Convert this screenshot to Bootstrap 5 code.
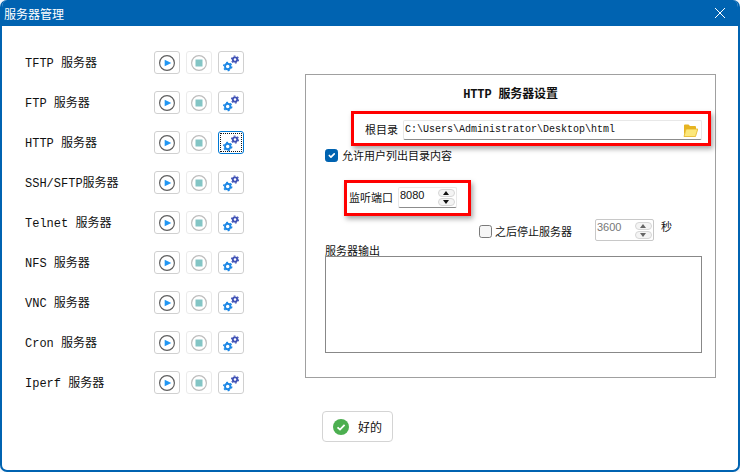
<!DOCTYPE html>
<html lang="zh">
<head>
<meta charset="utf-8">
<title>服务器管理</title>
<link href="https://cdn.jsdelivr.net/npm/bootstrap@5.3.0/dist/css/bootstrap.min.css" rel="stylesheet">
<style>
html,body{height:100%;margin:0;background:#f4f7fb;}
body{font:12px/14px "Liberation Mono","Noto Sans CJK SC",monospace;color:#111;overflow:hidden;}
.win{position:relative;width:740px;height:472px;background:#fff;border:solid #0063b1;border-width:0 2px 2px 2px;border-radius:7px;overflow:hidden;}
.titlebar{height:26px;background:#0063b1;color:#fff;margin:0 -2px;padding:0 14px 0 4px;font:12px "Liberation Sans","Noto Sans CJK SC",sans-serif;}
.main-area{padding:25px 0 0 23px;height:352px;}
.side{width:219px;flex:none;}
.srv-row{height:23px;margin-bottom:17px;}
.srv-name{width:129px;flex:none;padding-top:2px;}
.tools{gap:6px;}
.tool{width:26px;height:23px;padding:0;background:#fff;border:1px solid #d0d0d0;border-radius:3px;line-height:0;flex:none;}
.tool.off{border-color:#ebebeb;}
.tool.focused{border-color:#0078d4;outline:1px dotted #111;outline-offset:-3px;}
.tool svg{display:block;margin:auto;}
.panel-box{width:411px;height:304px;margin:23px 0 0 61px;border:1px solid #a0a0a0;padding:0 13px 0 19px;font:11px/14px "Noto Sans CJK SC","Liberation Sans",sans-serif;}
.panel-head{font:700 12px/14px "Liberation Mono","Noto Sans CJK SC",monospace;text-align:center;margin:13px -13px 18px -19px;height:14px;letter-spacing:-.15px;}
.dir-row{height:20px;margin-left:40px;}
.dir-row label{width:38px;padding-bottom:2px;}
.dir-field{flex:1;height:20px;border:1px solid #e8e8e8;border-bottom-color:#8c8c8c;border-radius:2px;padding:0 3px 0 1px;}
.dir-field span{flex:1;font:10px "Liberation Mono",monospace;padding-bottom:1px;}
.chk{width:13px;height:13px;margin:0;border-radius:3px;flex:none;}
.chk:checked{background-color:#0063b1;border-color:#0063b1;}
.chk.blank{background:#f6f6f6;border-color:#7a7a7a;}
.allow-row{margin-top:9px;height:13px;gap:4px;}
.allow-row span{padding-bottom:1px;}
.port-row{margin:25px 0 0 24px;height:21px;}
.port-row label{width:49px;padding-bottom:2px;}
.spin{height:21px;border:1px solid #e8e8e8;border-bottom-color:#8c8c8c;border-radius:2px;padding:0 1px 0 1px;}
.spin-w{width:59px;flex:none;}
.spin-val{flex:1;font:11px "Liberation Sans",sans-serif;padding-bottom:5px;}
.spin-btns{width:17px;gap:1px;flex:none;}
.spin-btn{height:8px;border:1px solid #d6d6d6;border-radius:4px;background:#f4f4f4;display:block;position:relative;}
.spin-btn::after{content:"";position:absolute;left:4px;border-left:3.5px solid transparent;border-right:3.5px solid transparent;}
.spin-btn.up::after{top:1px;border-bottom:4px solid #111;}
.spin-btn.dn::after{top:1px;border-top:4px solid #111;}
.stop-row{height:22px;margin:11px 0 0 154px;}
.stop-row .lbl{width:103px;padding-left:3px;margin-top:5px;flex:none;}
.stop-row .chk{margin-top:6px;}
.stop-row .spin-val{padding-bottom:6px;}
.spin.dis{height:22px;border:1px solid #c8c8c8;border-radius:2px;color:#777;}
.spin.dis .spin-btn.up::after{border-bottom-color:#666;}
.spin.dis .spin-btn.dn::after{border-top-color:#666;}
.sec{margin:0 0 0 7px;}
.out-lbl{height:13px;margin-top:2px;line-height:15px;}
.out-box{height:97px;border:1px solid #888;}
.footer-area{padding:33px 0 0 320px;}
.ok-btn{width:71px;height:31px;padding:0 0 0 10px;background:#fff;border:1px solid #d4d4d4;border-radius:4px;font:12px "Liberation Mono","Noto Sans CJK SC",monospace;color:#111;gap:9px;}
.mark-box{position:absolute;border:3px solid #f00;box-shadow:2px 3px 5px rgba(0,0,0,.35);pointer-events:none;}
.mark-a{left:349px;top:111px;width:360px;height:35px;}
.mark-b{left:342px;top:180px;width:127px;height:36px;}
</style>
</head>
<body>
<div class="win">
  <div class="titlebar d-flex justify-content-between align-items-center">
    <span>服务器管理</span>
    <svg width="12" height="12" viewBox="0 0 12 12"><path d="M1 1l10 10M11 1L1 11" stroke="#fff" stroke-width="1"/></svg>
  </div>
  <svg width="0" height="0" class="d-block">
    <defs>
      <g id="i-play"><circle cx="10" cy="10" r="7.4" fill="#fff" stroke="#5f5f5f" stroke-width="1.2"/><path d="M7.700 6.700 14.300 10 7.700 13.300z" fill="#2196f3"/></g>
      <g id="i-stop"><circle cx="10" cy="10" r="7.4" fill="#fff" stroke="#bdbdbd" stroke-width="1.2"/><rect x="6.500" y="6.500" width="7" height="7" fill="#83c5c5"/></g>
      <g id="i-gear"><circle cx="6.700" cy="13.500" r="2.700" fill="none" stroke="#1e88e5" stroke-width="1.900"/><circle cx="6.700" cy="13.500" r="4.100" fill="none" stroke="#1e88e5" stroke-width="1.300" stroke-dasharray="2 2.300"/><circle cx="14" cy="6.500" r="2.200" fill="none" stroke="#3f51b5" stroke-width="1.800"/><circle cx="14" cy="6.500" r="3.500" fill="none" stroke="#3f51b5" stroke-width="1.200" stroke-dasharray="1.800 1.870"/></g>
    </defs>
  </svg>
  <div class="main-area d-flex">
    <div class="side">
      <div class="srv-row d-flex align-items-center"><span class="srv-name">TFTP 服务器</span><div class="d-flex tools"><button class="btn tool"><svg width="20" height="20"><use href="#i-play"/></svg></button><button class="btn tool off"><svg width="20" height="20"><use href="#i-stop"/></svg></button><button class="btn tool"><svg width="20" height="20"><use href="#i-gear"/></svg></button></div></div>
      <div class="srv-row d-flex align-items-center"><span class="srv-name">FTP 服务器</span><div class="d-flex tools"><button class="btn tool"><svg width="20" height="20"><use href="#i-play"/></svg></button><button class="btn tool off"><svg width="20" height="20"><use href="#i-stop"/></svg></button><button class="btn tool"><svg width="20" height="20"><use href="#i-gear"/></svg></button></div></div>
      <div class="srv-row d-flex align-items-center"><span class="srv-name">HTTP 服务器</span><div class="d-flex tools"><button class="btn tool"><svg width="20" height="20"><use href="#i-play"/></svg></button><button class="btn tool off"><svg width="20" height="20"><use href="#i-stop"/></svg></button><button class="btn tool focused"><svg width="20" height="20"><use href="#i-gear"/></svg></button></div></div>
      <div class="srv-row d-flex align-items-center"><span class="srv-name">SSH/SFTP服务器</span><div class="d-flex tools"><button class="btn tool"><svg width="20" height="20"><use href="#i-play"/></svg></button><button class="btn tool off"><svg width="20" height="20"><use href="#i-stop"/></svg></button><button class="btn tool"><svg width="20" height="20"><use href="#i-gear"/></svg></button></div></div>
      <div class="srv-row d-flex align-items-center"><span class="srv-name">Telnet 服务器</span><div class="d-flex tools"><button class="btn tool"><svg width="20" height="20"><use href="#i-play"/></svg></button><button class="btn tool off"><svg width="20" height="20"><use href="#i-stop"/></svg></button><button class="btn tool"><svg width="20" height="20"><use href="#i-gear"/></svg></button></div></div>
      <div class="srv-row d-flex align-items-center"><span class="srv-name">NFS 服务器</span><div class="d-flex tools"><button class="btn tool"><svg width="20" height="20"><use href="#i-play"/></svg></button><button class="btn tool off"><svg width="20" height="20"><use href="#i-stop"/></svg></button><button class="btn tool"><svg width="20" height="20"><use href="#i-gear"/></svg></button></div></div>
      <div class="srv-row d-flex align-items-center"><span class="srv-name">VNC 服务器</span><div class="d-flex tools"><button class="btn tool"><svg width="20" height="20"><use href="#i-play"/></svg></button><button class="btn tool off"><svg width="20" height="20"><use href="#i-stop"/></svg></button><button class="btn tool"><svg width="20" height="20"><use href="#i-gear"/></svg></button></div></div>
      <div class="srv-row d-flex align-items-center"><span class="srv-name">Cron 服务器</span><div class="d-flex tools"><button class="btn tool"><svg width="20" height="20"><use href="#i-play"/></svg></button><button class="btn tool off"><svg width="20" height="20"><use href="#i-stop"/></svg></button><button class="btn tool"><svg width="20" height="20"><use href="#i-gear"/></svg></button></div></div>
      <div class="srv-row d-flex align-items-center"><span class="srv-name">Iperf 服务器</span><div class="d-flex tools"><button class="btn tool"><svg width="20" height="20"><use href="#i-play"/></svg></button><button class="btn tool off"><svg width="20" height="20"><use href="#i-stop"/></svg></button><button class="btn tool"><svg width="20" height="20"><use href="#i-gear"/></svg></button></div></div>
    </div>
    <div class="panel-box">
      <div class="panel-head">HTTP 服务器设置</div>
      <div class="dir-row d-flex align-items-center"><label>根目录</label><div class="dir-field d-flex align-items-center"><span>C:\Users\Administrator\Desktop\html</span>
        <svg width="15" height="15" viewBox="0 0 15 15"><path d="M1 2.500q0-1 1-1h3.500l1.500 1.500h5q1 0 1 1v2.500H3L1 12.500z" fill="#e6b422"/><path d="M1 13.500 3 6h11.800l-2.300 7.500z" fill="#fce77a" stroke="#e6b422" stroke-width=".8"/></svg></div></div>
      <div class="allow-row d-flex align-items-center"><input class="form-check-input chk" type="checkbox" checked><span>允许用户列出目录内容</span></div>
      <div class="port-row d-flex align-items-center"><label>监听端口</label><div class="spin spin-w d-flex align-items-center"><span class="spin-val">8080</span><div class="spin-btns d-flex flex-column"><span class="spin-btn up"></span><span class="spin-btn dn"></span></div></div></div>
      <div class="stop-row d-flex align-items-start"><input class="form-check-input chk blank" type="checkbox"><span class="lbl">之后停止服务器</span><div class="spin dis spin-w d-flex align-items-center"><span class="spin-val">3600</span><div class="spin-btns d-flex flex-column"><span class="spin-btn up"></span><span class="spin-btn dn"></span></div></div><span class="sec">秒</span></div>
      <div class="out-lbl">服务器输出</div>
      <div class="out-box"></div>
    </div>
  </div>
  <div class="footer-area">
    <button class="btn ok-btn d-flex align-items-center"><svg width="16" height="16" viewBox="0 0 16 16"><circle cx="8" cy="8" r="8" fill="#4caf50"/><path d="M4.500 8.300 7 10.600 11.600 5.800" fill="none" stroke="#fff" stroke-width="1.800"/></svg><span>好的</span></button>
  </div>
  <div class="mark-box mark-a"></div>
  <div class="mark-box mark-b"></div>
</div>
</body>
</html>
